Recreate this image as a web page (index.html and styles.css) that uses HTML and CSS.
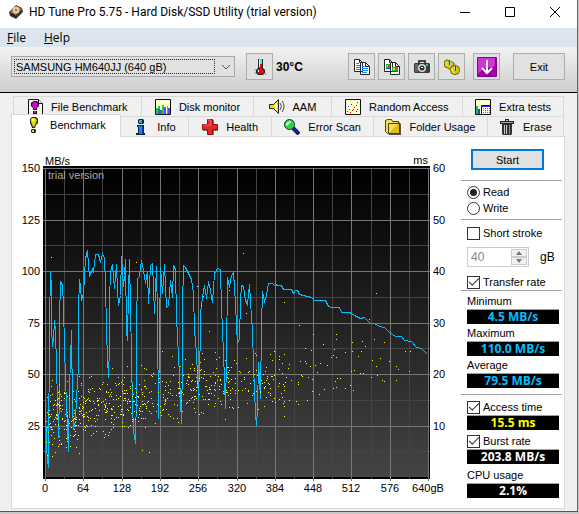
FILE: index.html
```
<!DOCTYPE html>
<html lang="en">
<head>
  <meta charset="UTF-8">
  <meta name="viewport" content="width=device-width, initial-scale=1.0">
  <title>HD Tune Pro 5.75</title>
  <link rel="stylesheet" href="styles.css">
</head>
<body>
  <div class="window">
    <header class="title-bar">
      <svg class="icon" viewBox="0 0 16 16">
        <path d="M1 8 8 1l6 3 1 4-7 7-6-3z" fill="#3b3634"/>
        <path d="M2 8 8 2l6 3-7 7z" fill="#8a7666"/>
        <circle cx="8" cy="6" r="3.5" fill="#f2c58e"/>
        <circle cx="8" cy="6" r="1" fill="#8c5a35"/>
        <path d="m3 9 4 2 1 2-4-2z" fill="#111"/>
      </svg>
      <h1>HD Tune Pro 5.75 - Hard Disk/SSD Utility (trial version)</h1>
      <div class="window-buttons">
        <button aria-label="Minimize"><svg viewBox="0 0 10 10"><path d="M0 5.5h10"/></svg></button>
        <button aria-label="Maximize"><svg viewBox="0 0 10 10"><path d="M.5.5h9v9h-9z"/></svg></button>
        <button aria-label="Close"><svg viewBox="0 0 10 10"><path d="m0 0 10 10M10 0 0 10"/></svg></button>
      </div>
    </header>

    <nav class="menu">
      <button><u>F</u>ile</button>
      <button><u>H</u>elp</button>
    </nav>

    <div class="toolbar">
      <div class="drive">
        <select aria-label="Drive">
          <option>SAMSUNG HM640JJ (640 gB)</option>
        </select>
        <svg viewBox="0 0 10 6"><path d="m1 1 4 4 4-4"/></svg>
      </div>
      <button class="tool" aria-label="Temperature">
        <svg class="icon" viewBox="0 0 16 16">
          <path d="M6 0h5v9l2 2v3l-2 2H6l-2-2v-3l2-2z" fill="#222"/>
          <path d="M7 0h3v5H7z" fill="#3ee"/>
          <path d="M7 5h3v5l2 1v3l-1 1H6l-1-1v-3l2-1z" fill="#e60012"/>
          <path d="M7 1h1v7H7zM6 11h1v2H6z" fill="#fff"/>
          <path d="M2 11h2M2 14h2M13 15h2" stroke="#999"/>
        </svg>
      </button>
      <strong class="temp">30°C</strong>
      <div class="tools">
        <button class="tool" aria-label="Copy text">
          <svg class="icon" viewBox="0 0 16 16">
            <path d="M.5.5h5l3 3v9h-8zM6.500 3.500h5l4 4v8h-9z" fill="#fff" stroke="#222"/>
            <path d="M5.500.5v3h3M11.500 3.500v4h4" fill="none" stroke="#222"/>
            <path d="M2 4.500h3M2 6.500h4M2 8.500h4M2 10.500h4M8 7.500h3M8 9.500h6M8 11.500h6M8 13.500h5" stroke="#2088e8"/>
          </svg>
        </button>
        <button class="tool" aria-label="Copy image">
          <svg class="icon" viewBox="0 0 16 16">
            <path d="M.5.5h5l3 3v9h-8zM6.500 3.500h5l4 4v8h-9z" fill="#fff" stroke="#222"/>
            <path d="M5.500.5v3h3M11.500 3.500v4h4" fill="none" stroke="#222"/>
            <path d="M2 5h4v5H2zM8 8h6v5H8z" fill="#0bbf35"/>
            <path d="M2 9h4v1H2zM8 12h6v1H8z" fill="#124a9c"/>
            <path d="M4 6h2v2H4zM11 9h2v2h-2z" fill="#ed3a17"/>
            <path d="M3 6h1v2H3zM9 9h2v2H9z" fill="#ffe300"/>
          </svg>
        </button>
        <button class="tool" aria-label="Screenshot">
          <svg class="icon" viewBox="0 0 16 16">
            <path d="M5 4V2h6v2" fill="none" stroke="#444" stroke-width="2"/>
            <path d="M1 4h14l1 1v8l-1 1H1l-1-1V5z" fill="#3a3a3e"/>
            <path d="M1 5h3v8H1z" fill="#65656a"/>
            <circle cx="8" cy="9" r="4" fill="#ddd"/>
            <circle cx="8" cy="9" r="2.500" fill="#333"/>
            <path d="M7 8h2v1H7z" fill="#fff"/>
            <path d="M12 5h2v2h-2z" fill="#16db37"/>
          </svg>
        </button>
        <button class="tool" aria-label="Options">
          <svg class="icon" viewBox="0 0 16 16">
            <path d="M2 1h2l1 1h2l1 1 2 1v2l-1 1v2L7 10H5L4 9 1 8 0 6l1-1-1-2z" fill="#d8ca00" stroke="#6e6800"/>
            <path d="M8 7h2l1-1 2 1 2 1v2l1 1-1 2-1 2h-2l-1 1-2-1-2-1v-2l-1-1z" fill="#d8ca00" stroke="#6e6800"/>
            <path d="M3 3 2 5l2 2M8 9v3l2 2" fill="none" stroke="#fff36a"/>
            <path d="M5 1h1v5H5zM11 7h1v5h-1z" fill="#444"/>
            <path d="M6 1h1v5H6zM10 7h1v5h-1z" fill="#ccc"/>
          </svg>
        </button>
        <button class="tool tool-save" aria-label="Save">
          <svg viewBox="0 0 20 20">
            <rect width="20" height="20" rx="1" fill="#83008c"/>
            <path d="M1 1h17v9Q8 9 1 17z" fill="#cf35d5"/>
            <path d="M2 18h17V5q-2 9-17 10z" fill="#a800b0"/>
            <path d="M10 3v13M5 11l5 5 5-5" fill="none" stroke="#fff" stroke-width="2"/>
          </svg>
        </button>
        <button class="exit">Exit</button>
      </div>
    </div>

    <main>
      <div class="tabs" role="tablist">
        <div class="tab-row">
          <button class="tab w-128" role="tab">
            <svg class="icon" viewBox="0 0 16 16">
              <path d="M1.500.5h10l4 4v11h-14z" fill="#f8f5e8" stroke="#111"/>
              <path d="M11.500.5v4h4" fill="#fff" stroke="#111"/>
              <path d="M5 3l2-1h3l2 2v3l-2 2v2H6V9L4 7V4z" fill="#111"/>
              <path d="M6 3h3l2 2-1 3-1 2H7L5 6z" fill="#d800d8"/>
              <path d="M6 12h4v3H6z" fill="#111"/><path d="M7 12h2v2H7z" fill="#d800d8"/>
            </svg>File Benchmark</button>
          <button class="tab w-113" role="tab">
            <svg class="icon" viewBox="0 0 16 16">
              <path d="M.5.5h15v15H.5z" fill="#ffffcf" stroke="#111"/>
              <path d="M1 9h2v-2h2v8H1zM7 6h2v9H7zM12 7h1v8h-1z" fill="#18d52a"/>
              <path d="M3 10h2v5H3zM5 11h2v4H5zM9 8h2v7H9zM13 9h2v6h-2z" fill="#4c4cff"/>
            </svg>Disk monitor</button>
          <button class="tab w-77" role="tab">
            <svg class="icon" viewBox="0 0 16 16">
              <path d="M.5 5.500h4l5-5v14l-5-5h-4z" fill="#f1df00" stroke="#222"/>
              <path d="M6 4h2v7H6z" fill="#fff"/>
              <path d="M11 4q3 3 0 7M13 2q4 5 0 11" fill="none" stroke="#444"/>
            </svg>AAM</button>
          <button class="tab w-132" role="tab">
            <svg class="icon" viewBox="0 0 16 16">
              <path d="M.5.5h15v15H.5z" fill="#ffffcf" stroke="#111"/>
              <path d="M2 12h1v1H2zM4 10h1v1H4zM7 11h1v1H7zM11 6h1v1h-1zM5 13h1v1H5zM12 10h1v1h-1z" fill="#e00"/>
              <path d="M3 7h1v1H3zM6 5h1v1H6zM9 8h1v1H9zM12 3h1v1h-1zM8 10h1v1H8zM11 12h1v1h-1z" fill="#22f"/>
            </svg>Random Access</button>
          <button class="tab w-101" role="tab">
            <svg class="icon" viewBox="0 0 16 16">
              <path d="M.5.5h15v15H.5z" fill="#ffffcf" stroke="#111"/>
              <path d="M1 7h2v3h2v5H1z" fill="#17ce25"/><path d="M3 10h2v5H3z" fill="#33f"/>
              <path d="M6.500 6.500h9v9h-9z" fill="#fff" stroke="#111"/><path d="M7 7h8v1H7z" fill="#33f"/>
              <path d="M8 9.500h7M8 11.500h7M8 13.500h7" stroke="#e33" stroke-dasharray="1 1"/>
            </svg>Extra tests</button>
        </div>
        <div class="tab-row front">
          <button class="tab w-109 active" role="tab" aria-selected="true">
            <svg class="icon" viewBox="0 0 16 16">
              <path d="M6 0h4l2 2v4l-2 2-1 3H6L5 8 4 6V2z" fill="#222"/>
              <path d="M6 1h3l2 2-1 3-1 2-1 2H7L6 7 5 5V2z" fill="#e5dc00"/>
              <path d="M6 2h2v2H6z" fill="#ffa"/>
              <path d="M6 12h3l1 1v2l-1 1H6l-1-1v-2z" fill="#222"/><path d="M6 13h2v2H6z" fill="#e5dc00"/>
            </svg>Benchmark</button>
          <button class="tab w-68" role="tab">
            <svg class="icon" viewBox="0 0 16 16">
              <path d="M6 0h4l1 1v3l-1 1H6L5 4V1zM4 6h7v8h1v2H3v-2h2V8H4z" fill="#123"/>
              <path d="M6 1h3v3H6z" fill="#20b8e8"/><path d="M5 7h4v8H6V8H5z" fill="#1282ff"/>
              <path d="M9 8h1v7H9z" fill="#0838bb"/>
            </svg>Info</button>
          <button class="tab w-83" role="tab">
            <svg class="icon" viewBox="0 0 16 16">
              <path d="M6 1h6v5h4v6h-4v4H6v-4H1V6h5z" fill="#777"/>
              <path d="M5.500.5h5v5h5v5h-5v5h-5v-5h-5v-5h5z" fill="#e82828" stroke="#8c1010"/>
              <path d="M6 1h3v5H1" fill="none" stroke="#ff6767"/>
            </svg>Health</button>
          <button class="tab w-102" role="tab">
            <svg class="icon" viewBox="0 0 16 16">
              <path d="m9 9 6 6" stroke="#111" stroke-width="4"/><path d="m9 9 5 5" stroke="#2020d8" stroke-width="2"/>
              <circle cx="5.500" cy="5.500" r="5" fill="#27d647" stroke="#234"/>
              <path d="M2 6q0-3 4-4l1 1-4 4z" fill="#c9ffd0"/>
            </svg>Error Scan</button>
          <button class="tab w-114" role="tab">
            <svg class="icon" viewBox="0 0 16 16">
              <path d="M3 3h11l2 2v11H4z" fill="#555"/>
              <path d="M.5 1.500l2-1h4l1 2h6v12h-11l-2-2z" fill="#f6e34a" stroke="#4c4300"/>
              <path d="M3.500 4.500h11v10h-11z" fill="#dfbc1b" stroke="#4c4300"/>
              <path d="M4 5h9L5 13H4z" fill="#f6dd50"/>
            </svg>Folder Usage</button>
          <button class="tab w-76" role="tab">
            <svg class="icon" viewBox="0 0 16 16">
              <path d="M3 4h10v11l-1 1H4l-1-1z" fill="#333"/>
              <path d="M1 2h5V0h4v2h5v3H1z" fill="#222"/>
              <path d="M2 3h12v1H2z" fill="#aaa"/><path d="M7 1h2v1H7z" fill="#ccc"/>
              <path d="M5.500 6v9M7.500 6v9" stroke="#c8c8c8"/><path d="M10.500 6v9" stroke="#888"/>
            </svg>Erase</button>
        </div>
      </div>

      <div class="panel">
        <svg class="chart" viewBox="12 137 449 371" preserveAspectRatio="xMidYMin meet" role="img" aria-label="Benchmark graph">
          <defs>
            <linearGradient id="fade" x1="0" y1="0" x2="0" y2="1">
              <stop offset="0" stop-color="#000"/>
              <stop offset="1" stop-color="#444"/>
            </linearGradient>
          </defs>
          <rect x="43" y="166" width="387" height="313" fill="#000"/>
          <rect x="46" y="169" width="382" height="308" fill="url(#fade)"/>
          <g id="grid" shape-rendering="crispEdges"></g>
          <text class="watermark" x="48" y="179">trial version</text>
          <g id="labels">
            <text x="45" y="165">MB/s</text>
            <text x="428" y="164" text-anchor="end">ms</text>
          </g>
          <polyline id="rate" class="rate" shape-rendering="crispEdges"/>
          <path id="access" class="access" shape-rendering="crispEdges"/>
        </svg>

        <aside class="side">
          <button class="start">Start</button>
          <div class="group modes">
            <label><input type="radio" name="mode" checked>Read</label>
            <label><input type="radio" name="mode">Write</label>
          </div>
          <div class="group options">
            <label><input type="checkbox">Short stroke</label>
            <div class="size">
              <div class="spinner">
                <input type="number" id="size" value="40" disabled>
                <button disabled aria-label="More"><svg viewBox="0 0 6 4"><path d="m0 4 3-4 3 4z"/></svg></button>
                <button disabled aria-label="Less"><svg viewBox="0 0 6 4"><path d="m0 0 3 4 3-4z"/></svg></button>
              </div>
              <label for="size">gB</label>
            </div>
            <label><input type="checkbox" checked>Transfer rate</label>
          </div>
          <div class="group results">
            <span>Minimum</span>
            <output class="blue">4.5 MB/s</output>
            <span>Maximum</span>
            <output class="blue">110.0 MB/s</output>
            <span>Average</span>
            <output class="blue">79.5 MB/s</output>
          </div>
          <div class="group results more">
            <label><input type="checkbox" checked>Access time</label>
            <output class="yellow">15.5 ms</output>
            <label><input type="checkbox" checked>Burst rate</label>
            <output>203.8 MB/s</output>
            <span>CPU usage</span>
            <output>2.1%</output>
          </div>
        </aside>
      </div>
    </main>
  </div>
  <script src="chart.js"></script>
</body>
</html>
```
FILE: styles.css
```
* { box-sizing: border-box; margin: 0; padding: 0; }

body {
  background: #c8c8c8;
  color: #000;
  font: 12px/16px "Liberation Sans", Arial, sans-serif;
}

button, input, select {
  font: inherit;
  color: inherit;
}

button {
  border: 0;
  background: none;
}

.window {
  margin-right: 1px;
  border-right: 1px solid #666;
  border-bottom: 1px solid #555;
  background: #f0f0f0;
}

.icon {
  width: 16px;
  height: 16px;
  flex: none;
}

/* title bar and menu */
.title-bar {
  display: flex;
  align-items: center;
  height: 28px;
  padding: 0 7px 4px 8px;
  background: #fff;
}

.title-bar h1 {
  margin-left: 5px;
  font: 12px/16px Roboto, sans-serif;
  white-space: nowrap;
}

.window-buttons {
  display: flex;
  margin-left: auto;
}

.window-buttons button {
  display: flex;
  align-items: center;
  justify-content: center;
  width: 45px;
  height: 20px;
}

.window-buttons button:last-child { margin-right: -7px; }

.window-buttons svg {
  width: 10px;
  height: 10px;
  fill: none;
  stroke: #000;
}

.menu {
  display: flex;
  gap: 18px;
  height: 19px;
  padding-left: 7px;
  background: #dce4ed;
}

.menu button { font: 12px/19px "Open Sans", sans-serif; }

/* toolbar */
.toolbar {
  display: flex;
  align-items: center;
  height: 46px;
  padding: 0 11px 6px;
  border-bottom: 1px solid #000;
  background: linear-gradient(#f2f2f2, #cdcdcd);
}

.drive {
  position: relative;
  flex: 0 1 224px;
}

.drive select {
  display: block;
  width: 100%;
  height: 21px;
  padding-left: 4px;
  border: 1px solid #a4a8ac;
  border-radius: 0;
  background: #e1e1e1;
  font-size: 11px;
  appearance: none;
}

.drive::after {
  content: "";
  position: absolute;
  inset: 3px 20px 3px 3px;
  border: 1px dotted #222;
  pointer-events: none;
}

.drive svg {
  position: absolute;
  top: 8px;
  right: 4px;
  width: 10px;
  height: 6px;
  fill: none;
  stroke: #555;
  pointer-events: none;
}

.tool, .exit {
  display: flex;
  align-items: center;
  justify-content: center;
  width: 27px;
  height: 27px;
  border: 1px solid #adadad;
  background: #e1e1e1;
}

.drive + .tool { margin-left: 11px; }

.temp {
  margin-left: 3px;
}

.tools {
  display: flex;
  gap: 3px;
  margin-left: auto;
  padding-right: 1px;
}

.tool-save { margin-left: 5px; }
.tool-save svg { width: 20px; height: 20px; }

.exit {
  width: 52px;
  margin-left: 10px;
  font-size: 11px;
}

/* tabs */
main { padding: 3px 12px 2px 11px; }

.tabs { padding: 0 1px 0 2px; }

.tab-row { display: flex; }

.tab {
  display: flex;
  align-items: center;
  justify-content: center;
  gap: 8px;
  min-width: 0;
  height: 20px;
  border: 1px solid #d9d9d9;
  border-left: 0;
  border-bottom: 0;
  font-size: 11px;
  white-space: nowrap;
}

.tab:first-child { border-left: 1px solid #d9d9d9; }

.w-128 { flex: 128 1 0; }
.w-113 { flex: 113 1 0; }
.w-77 { flex: 77 1 0; }
.w-132 { flex: 132 1 0; }
.w-101 { flex: 101 1 0; }
.w-109 { flex: 109 1 0; }
.w-68 { flex: 68 1 0; }
.w-83 { flex: 83 1 0; }
.w-102 { flex: 102 1 0; }
.w-114 { flex: 114 1 0; }
.w-76 { flex: 76 1 0; }

.front { margin-left: -2px; }

.tab.active {
  height: 23px;
  margin: -2px 0 -1px;
  padding-bottom: 2px;
  background: #fff;
  z-index: 1;
}

.panel {
  display: flex;
  align-items: flex-start;
  border: 1px solid #d9d9d9;
  background: #fff;
}

/* chart */
.chart {
  flex: 1;
  min-width: 0;
  display: block;
}

.chart text {
  font: 11px "Liberation Sans", Arial, sans-serif;
  fill: #000;
}

.chart .watermark { fill: #aaa; }

.major { stroke: #777; }
.minor { stroke: #444; }

.rate {
  fill: none;
  stroke: #00bfff;
}

.access { fill: #ff0; }

/* side panel */
.side {
  width: 103px;
  flex: none;
  padding: 12px 2px 8px 0;
  font-size: 11px;
  line-height: 16px;
}

.start {
  display: block;
  width: 73px;
  height: 21px;
  margin: 0 0 10px 10px;
  border: 2px solid #0078d7;
  background: #e1e1e1;
}

.group {
  display: flex;
  flex-direction: column;
  padding-left: 6px;
  border-top: 1px solid #a0a0a0;
}

.group label {
  display: flex;
  align-items: center;
  gap: 3px;
  white-space: nowrap;
}

.modes { padding-top: 3px; padding-bottom: 3px; }
.options { padding-top: 5px; }

input[type="radio"], input[type="checkbox"] {
  display: flex;
  align-items: center;
  justify-content: center;
  width: 13px;
  height: 13px;
  flex: none;
  border: 1px solid #333;
  background: #fff;
  appearance: none;
}

input[type="radio"] { border-radius: 50%; }

input[type="radio"]:checked::before {
  content: "";
  width: 7px;
  height: 7px;
  border-radius: 50%;
  background: #222;
}

input[type="checkbox"]:checked::before {
  content: "";
  width: 9px;
  height: 4px;
  margin-bottom: 3px;
  border: solid #333;
  border-width: 0 0 1px 1px;
  transform: rotate(-45deg);
}

.size {
  display: flex;
  align-items: center;
  gap: 11px;
  margin: 6px 0 7px;
  font-size: 12px;
}

.spinner {
  display: grid;
  grid-template: 1fr 1fr / 1fr 16px;
  width: 62px;
  height: 20px;
  padding: 1px;
  border: 1px solid #ccc;
}

.spinner input {
  grid-row: span 2;
  min-width: 0;
  padding-left: 2px;
  border: 0;
  background: #fff;
  color: #888;
  appearance: textfield;
}

.spinner button {
  display: flex;
  align-items: center;
  justify-content: center;
  border: 1px solid #ccc;
  background: #f0f0f0;
}

.spinner svg {
  width: 6px;
  height: 4px;
  fill: #777;
}

.results {
  padding-top: 2px;
  padding-right: 3px;
}

.results output {
  height: 15px;
  margin-bottom: 1px;
  border-top: 1px solid #a0a0a0;
  background: #000;
  color: #fff;
  font: bold 12px/14px "Open Sans", sans-serif;
  text-align: center;
}

.results .blue { color: #00bfff; }
.results .yellow { color: #ff0; }

.more {
  margin-top: 5px;
  padding-top: 4px;
}

.more output { margin-bottom: 3px; }
.more output:last-child { margin-bottom: 0; }
```
FILE: chart.js
```
const left = 45, right = 428, top0 = 168, bottom = 477;
const grid = document.getElementById('grid');
const labels = document.getElementById('labels');

function add(parent, name, attrs, text) {
  const el = document.createElementNS('http://www.w3.org/2000/svg', name);
  for (const key in attrs) el.setAttribute(key, attrs[key]);
  if (text !== undefined) el.textContent = text;
  parent.appendChild(el);
}

// minor lines first so the major ones stay on top
for (const minor of [true, false]) {
  for (let i = minor ? 1 : 0; i <= 20; i += 2) {
    const x = Math.round(left + (right - left) * i / 20) + 0.5;
    add(grid, 'path', { d: `M${x} 168V${minor ? 479 : 481}`, class: minor ? 'minor' : 'major' });
  }
  for (let i = minor ? 1 : 0; i < 12; i += 2) {
    const y = Math.round(top0 + (bottom - top0) * i / 12) + 0.5;
    add(grid, 'path', { d: `M43 ${y}H430`, class: minor ? 'minor' : 'major' });
  }
}

for (let i = 0; i <= 10; i++) {
  const x = Math.round(left + (right - left) * i / 10);
  add(labels, 'text', { x, y: 492, 'text-anchor': 'middle' }, i * 64 + (i === 10 ? 'gB' : ''));
}
for (let i = 0; i < 6; i++) {
  const y = Math.round(top0 + (bottom - top0) * i / 6) + 4;
  add(labels, 'text', { x: 40, y, 'text-anchor': 'end' }, 150 - i * 25);
  add(labels, 'text', { x: 433, y }, 60 - i * 10);
}

// transfer rate
document.getElementById('rate').setAttribute('points', `
45,402 46,447 47,460 48,467 49,322 50,272 51,287 51,327 52,346 53,338 54,320 55,330 58,437 59,392
59,320 60,281 62,285 63,305 64,348 66,405 68,451 69,388 71,330 72,405 73,429 75,420 76,397 78,367
78,308 79,279 80,286 81,300 83,293 84,276 85,258 87,250 88,265 89,275 92,269 93,271 95,254 98,254
100,262 102,253 104,258 105,283 106,330 107,358 108,377 109,345 109,300 110,271 112,264 114,288
116,264 117,290 118,305 120,295 121,256 123,286 124,275 125,259 126,330 127,340 128,290 129,259
130,307 132,405 133,430 135,443 136,392 136,325 137,278 139,276 141,260 143,270 145,283 147,271
148,303 150,265 152,263 154,313 156,266 157,317 158,418 159,330 160,267 162,293 164,264 166,307
168,305 170,280 172,297 173,265 175,269 176,317 179,375 181,423 182,358 182,307 183,265 185,267
188,273 191,279 193,293 194,330 196,353 198,398 200,335 200,313 201,304 202,297 204,285 206,298
208,281 210,290 212,302 214,273 217,268 220,269 221,307 223,352 225,408 226,358 227,277 229,287
231,275 233,272 235,303 236,325 237,343 239,338 240,300 241,285 243,286 245,300 247,304 249,284
251,317 252,330 253,365 255,413 256,425 257,408 258,362 260,398 261,325 262,291 264,301 266,295
268,283 272,283 274,285 275,284 277,285 281,285 283,289 291,289 293,293 295,290 297,290 299,294
303,295 311,297 314,300 325,300 328,306 331,307 339,307 341,312 349,312 356,316 360,318 364,317
368,321 370,323 374,323 379,326 384,327 389,332 395,336 401,336 404,340 411,341 416,347 421,348
424,351 427,354`.trim().split(/\s+/).map(p => p.split(',').map(n => +n + 0.5).join()).join(' '));

// access times
const samples = [
  [51,257],[136,262],[197,286],[203,296],[201,305],[229,290],[243,253],[246,313],[284,302],[299,325],
  [376,293],[369,319],[209,331],[162,351],[172,356],[127,366],[215,352],[142,450],[149,452],[225,419],
  [313,334],[336,334],[374,339],[362,341],[323,344],[336,339],[352,342],[365,346],[384,342],[305,348],
  [334,349],[311,350],[345,352],[352,351],[361,351],[405,351],[410,351],[255,353],[274,351],[284,354],
  [333,355],[279,356],[331,357],[358,356],[380,358],[389,361],[300,361],[305,361],[336,357],[372,360],
  [246,358],[279,359],[256,355],[236,363],[231,367],[282,363],[289,364],[306,363],[320,363],[315,365],
  [310,366],[288,368],[327,365],[396,366],[398,369],[354,370],[376,366],[409,371],[351,371],[317,372],
  [360,373],[363,373],[301,375],[377,375],[382,380],[396,380],[302,376],[308,377],[286,377],[312,379],
  [291,380],[337,378],[340,378],[335,381],[384,381],[298,382],[298,384],[279,383],[283,384],[371,377],
  [336,387],[333,388],[345,388],[350,385],[353,390],[324,389],[312,391],[319,394],[307,400],[296,401],
  [298,404],[289,400],[279,399],[284,401],[270,393],[270,395],[274,398],[266,397],[275,402],[283,403]
];

let seed = 41;
function random() {
  seed = (seed * 16807) % 2147483647;
  return seed / 2147483647;
}

function scatter(count, from, to, y1, y2, spread) {
  for (let i = 0; i < count; i++) {
    const t = random();
    const offset = (random() + random() + random() - 1.5) * spread;
    samples.push([Math.round(from + t * (to - from)), Math.round(y1 + t * (y2 - y1) + offset)]);
  }
}

scatter(170, 46, 85, 420, 412, 32);
scatter(200, 85, 145, 411, 400, 30);
scatter(145, 145, 210, 401, 384, 29);
scatter(55, 210, 235, 389, 384, 25);
scatter(60, 235, 285, 389, 381, 24);

document.getElementById('access').setAttribute('d', samples.map(([x, y]) => `M${x} ${y}h1v1h-1z`).join(''));
```
